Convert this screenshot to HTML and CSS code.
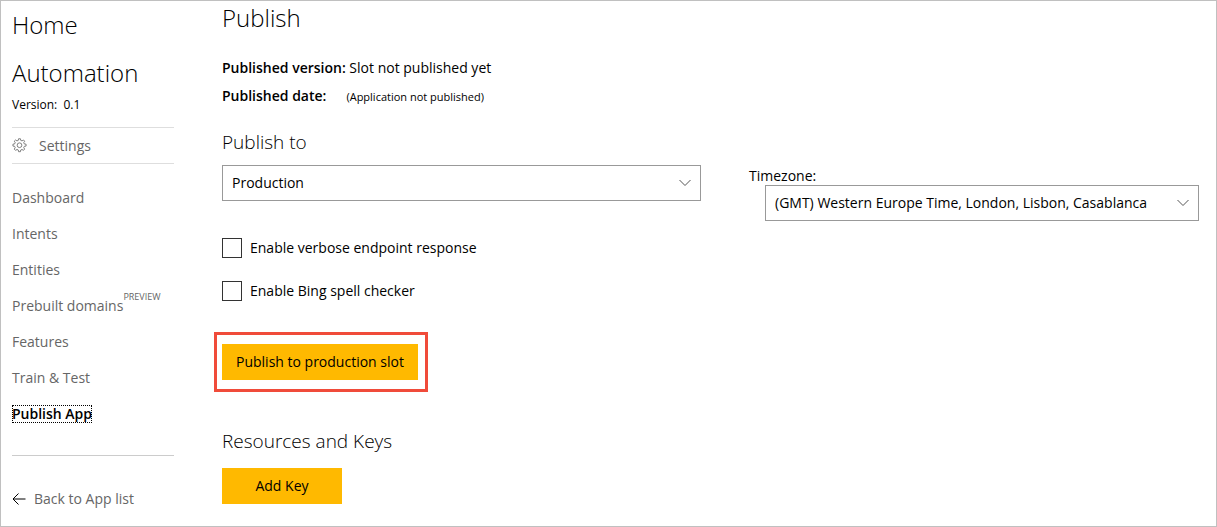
FILE: index.html
```html
<!DOCTYPE html>
<html lang="en">
<head>
<meta charset="utf-8">
<title>Publish App</title>
<link rel="stylesheet" href="styles.css">
</head>
<body>
<div class="app">
  <aside class="sidebar">
    <a class="title" href="#">Home</a>
    <h1 class="title app-name">Automation</h1>
    <p class="version">Version:&nbsp; 0.1</p>
    <a class="settings" href="#">
      <svg class="gear" viewBox="0 0 16 16" aria-hidden="true">
        <path d="M6.7 2.500 7 .8h2l.3 1.700 1.400.6 1.500-1 1.300 1.300-1 1.500.6 1.400 1.900.3v2l-1.900.3-.6 1.400 1 1.500-1.300 1.400-1.500-1-1.400.6-.3 1.800H7l-.3-1.800-1.400-.6-1.500 1-1.400-1.400 1-1.500-.6-1.400L1 8.600V6.600l1.800-.3.6-1.400-1-1.500 1.400-1.300 1.500 1z"/>
        <circle cx="8" cy="7.700" r="2.500"/>
      </svg>
      Settings
    </a>
    <nav class="nav">
      <a href="#">Dashboard</a>
      <a href="#">Intents</a>
      <a href="#">Entities</a>
      <a href="#">Prebuilt domains<span class="preview">PREVIEW</span></a>
      <a href="#">Features</a>
      <a href="#">Train &amp; Test</a>
      <a href="#" aria-current="page"><span class="current">Publish App</span></a>
    </nav>
    <a class="back" href="#">
      <svg class="arrow" viewBox="0 0 14 14" aria-hidden="true"><path d="M13.500 7H1M6.500 1.500 1 7l5.500 5.500"/></svg>
      Back to App list
    </a>
  </aside>
  <main class="main">
    <h2 class="title">Publish</h2>
    <div class="facts">
      <p><b>Published version:</b> Slot not published yet</p>
      <p><b>Published date:</b><small>(Application not published)</small></p>
    </div>
    <h3 class="subtitle" id="slot-title">Publish to</h3>
    <div class="options">
      <div class="slot">
        <div class="picker">
          <select aria-labelledby="slot-title"><option>Production</option></select>
          <svg class="chevron" viewBox="0 0 12 8" aria-hidden="true"><path d="M.5 1 6 6.500 11.500 1"/></svg>
        </div>
        <div class="checks">
          <label class="check"><input type="checkbox">Enable verbose endpoint response</label>
          <label class="check"><input type="checkbox">Enable Bing spell checker</label>
        </div>
      </div>
      <div class="zone">
        <label for="timezone">Timezone:</label>
        <div class="picker">
          <select id="timezone"><option>(GMT) Western Europe Time, London, Lisbon, Casablanca</option></select>
          <svg class="chevron" viewBox="0 0 12 8" aria-hidden="true"><path d="M.5 1 6 6.500 11.500 1"/></svg>
        </div>
      </div>
    </div>
    <div class="highlight"><button class="button" type="button">Publish to production slot</button></div>
    <h3 class="subtitle">Resources and Keys</h3>
    <button class="button add-key" type="button">Add Key</button>
  </main>
</div>
</body>
</html>
```
FILE: styles.css
```css
* { box-sizing: border-box; }

body {
  margin: 0;
  background: #fff;
  color: #000;
  font: 14px/20px "Segoe UI", "Open Sans", "Noto Sans", sans-serif;
}

h1, h2, h3, p { margin: 0; }
a { color: #666; text-decoration: none; }
b { font-weight: 600; }
svg { fill: none; stroke: currentColor; }

.app {
  display: flex;
  gap: 48px;
  min-height: 100vh;
  padding: 0 17px 0 11px;
  border: 1px solid #c0c0c0;
}

.title {
  display: block;
  color: #000;
  font-size: 24px;
  font-weight: 300;
  line-height: 32px;
}

.subtitle {
  font-size: 19px;
  font-weight: 300;
  line-height: 24px;
}

.sidebar { flex: 0 0 162px; padding-top: 8px; }
.app-name { margin-top: 16px; }
.version { margin-top: 6px; font-size: 12px; }

.settings {
  display: flex;
  align-items: center;
  gap: 12px;
  height: 37px;
  margin-top: 12px;
  border: solid #dedede;
  border-width: 1px 0;
}
.gear { width: 15px; height: 15px; color: #777; }

.nav {
  padding: 16px 0 23px;
  border-bottom: 1px solid #ccc;
}
.nav a { display: block; line-height: 36px; white-space: nowrap; }
.preview {
  font-size: 9px;
  line-height: 1;
  vertical-align: 11px;
}
.current {
  outline: 1px dotted #000;
  outline-offset: -1px;
  color: #000;
  font-weight: 600;
  line-height: 18px;
  display: inline-block;
}

.back {
  display: flex;
  align-items: center;
  gap: 8px;
  margin-top: 33px;
}
.arrow { width: 14px; height: 14px; color: #000; }

.main { flex: 1; padding: 1px 0 22px; }
.facts { margin: 20px 0 19px; line-height: 28px; }
.facts small { margin-left: 20px; font-size: 11px; }

.options {
  display: grid;
  grid-template-columns: 479fr 450fr;
  gap: 48px;
  margin-top: 11px;
}
.zone { padding: 2px 0 0 16px; line-height: 18px; }
.zone label { display: block; margin-left: -16px; }

.picker { display: grid; align-items: center; }
.picker > * { grid-area: 1 / 1; }
.picker select {
  appearance: none;
  width: 100%;
  min-width: 0;
  height: 36px;
  padding: 0 32px 0 9px;
  border: 1px solid #999;
  border-radius: 0;
  background: #fff;
  color: #000;
  font: inherit;
}
.chevron {
  justify-self: end;
  width: 12px;
  height: 8px;
  margin-right: 10px;
  color: #555;
  pointer-events: none;
}

.checks { display: grid; gap: 23px; margin-top: 37px; }
.check { display: flex; align-items: center; gap: 8px; }
.check input {
  appearance: none;
  width: 20px;
  height: 20px;
  margin: 0;
  border: 1px solid #333;
}

.highlight {
  width: fit-content;
  margin: 31px 0 37px -8px;
  padding: 9px 7px 9px 5px;
  border: 3px solid #f04b3a;
}
.button {
  display: block;
  min-width: 120px;
  height: 36px;
  padding: 0 14px;
  border: 0;
  background: #ffb900;
  color: #000;
  font: inherit;
}
.add-key { margin-top: 15px; }
```
